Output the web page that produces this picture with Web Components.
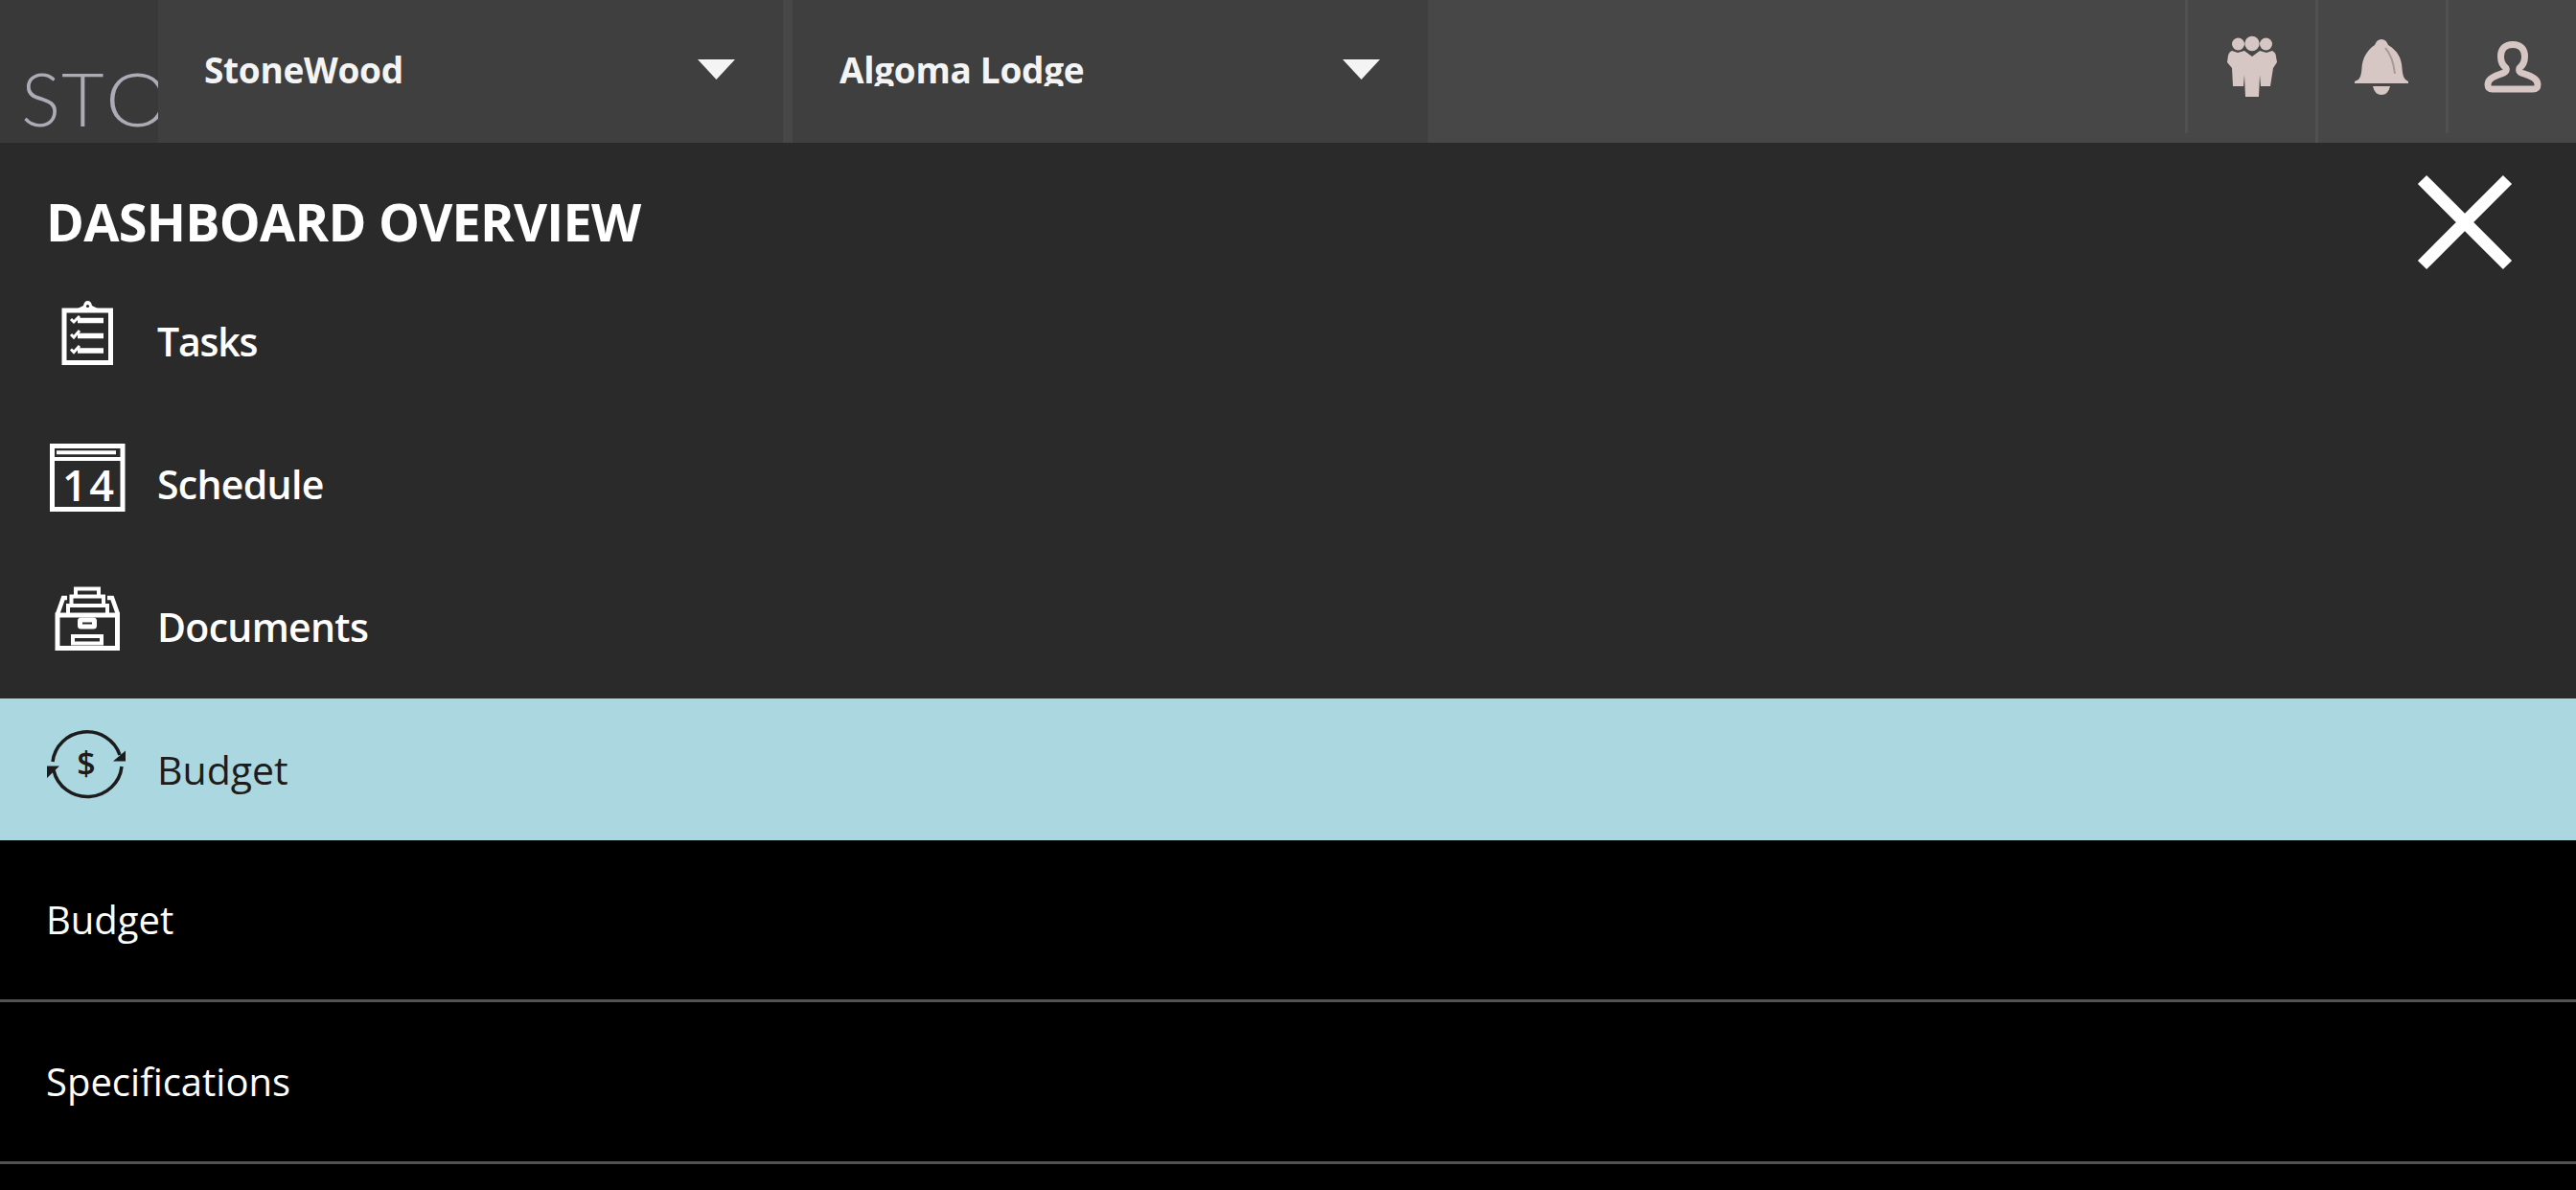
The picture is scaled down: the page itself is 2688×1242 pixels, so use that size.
<!DOCTYPE html>
<html lang="en">
<head>
<meta charset="utf-8">
<title>Dashboard Overview</title>
<style>
  html, body {
    margin: 0;
    height: 100%;
    overflow: hidden;
    background: #000;
    font-family: "Open Sans", "Noto Sans", sans-serif;
  }
</style>
</head>
<body>
<sw-app>
  <sw-header slot="header">
    <sw-logo><span style="width:42px">S</span><span style="width:46px">T</span><span style="transform:scaleX(1.1)">O</span></sw-logo>
    <sw-select style="width:652px; --pad:48px; --arrow:50px; --arrow-width:39px; --spacing:-0.3px">StoneWood</sw-select>
    <sw-select style="width:663px; margin-left:10px; --pad:49px; --arrow:50px; --arrow-width:39px; --spacing:-0.3px">Algoma Lodge</sw-select>
    <sw-action slot="actions" icon="people" short></sw-action>
    <sw-action slot="actions" icon="bell"></sw-action>
    <sw-action slot="actions" icon="user" short></sw-action>
  </sw-header>
  <sw-menu heading="DASHBOARD OVERVIEW">
    <sw-menu-item icon="tasks" style="letter-spacing:-1.2px">Tasks</sw-menu-item>
    <sw-menu-item icon="schedule">Schedule</sw-menu-item>
    <sw-menu-item icon="documents">Documents</sw-menu-item>
    <sw-menu-item icon="budget" active>Budget</sw-menu-item>
    <sw-submenu-item>Budget</sw-submenu-item>
    <sw-submenu-item>Specifications</sw-submenu-item>
  </sw-menu>
</sw-app>

<script>
const ICONS = {
  people: `
    <svg width="54" height="66" viewBox="0 0 54 66" fill="currentColor">
      <circle cx="12.500" cy="9" r="6.500"/>
      <circle cx="27" cy="8.500" r="7.700"/>
      <circle cx="41.500" cy="9" r="6.500"/>
      <path d="M6 16 L12 18 L19 16 L27 22 L35 16 L42 18 L48 16 Q52 18 52 22 L53 28 L49 34 L46 53 H36 L35 41 L34 64 H20 L19 41 L18 53 H7 L6 34 L1 28 L2 21 Q3 17 6 16 Z"/>
    </svg>`,
  bell: `
    <svg width="58" height="62" viewBox="0 0 58 62">
      <path fill="currentColor" d="M29 2 Q34 2 36 8 C46 14 50 22 50.500 32 Q51 41 54 44 L57 46 V48 H1 V46 L5 44 Q8 41 8.500 32 C9 22 14 13 22 8 Q24 2 29 2 Z"/>
      <path fill="currentColor" d="M20 51 H38 Q36 60 29 60 Q22 60 20 51 Z"/>
      <path fill="none" stroke="#a79b99" stroke-width="2" d="M33 11 Q41 20 43 38"/>
    </svg>`,
  user: `
    <svg width="60" height="56" viewBox="0 0 60 56" fill="none" stroke="currentColor" stroke-width="7" stroke-linejoin="round">
      <path d="M30 4.500 C21 4.500 17.500 10 17.500 17 C17.500 23 19 26 23 29 C24 32 22 34 18 35 C9 38 4 41 4 46 C4 50 5 51 9 51 H51 C55 51 56 50 56 46 C56 41 51 38 42 35 C37 34 36 32 37 29 C41 26 42.500 23 42.500 17 C42.500 10 39 4.500 30 4.500 Z"/>
    </svg>`,
  close: `
    <svg width="100" height="100" viewBox="0 0 100 100" stroke="#fff" stroke-width="13">
      <path d="M5.500 5.500 L94.500 94.500 M94.500 5.500 L5.500 94.500"/>
    </svg>`,
  tasks: `
    <svg width="84" height="100" viewBox="0 0 84 100" fill="none" stroke="currentColor" stroke-width="5">
      <path d="M19 22 H67.500 V76.500 H19 Z"/>
      <path fill="currentColor" stroke="none" d="M33 24 V20 L39 17 Q40 12 43.500 12 Q47 12 48 17 L54 20 V24 Z"/>
      <circle cx="43.500" cy="17.500" r="1.600" fill="#2a2a2a" stroke="none"/>
      <path stroke-width="5.500" d="M33 32.500 H60 M33 48.500 H60 M33 64 H60"/>
      <path stroke-width="3" d="M26 31 L29 34 L35 28 M26 47 L29 50 L35 43 M26 62.500 L29 65.500 L35 59"/>
    </svg>`,
  schedule: `
    <svg width="84" height="100" viewBox="0 0 84 100" fill="none" stroke="currentColor" stroke-width="5">
      <path d="M6.500 14.500 H80 V80.500 H6.500 Z"/>
      <path stroke-width="4" d="M11 21.300 H73 M5 28 H80"/>
      <text x="17" y="71.500" fill="currentColor" stroke="none" font-size="45" font-weight="650" textLength="54">14</text>
    </svg>`,
  documents: `
    <svg width="84" height="100" viewBox="0 0 84 100" fill="none" stroke="currentColor" stroke-width="5">
      <path d="M12 42 H74.500 V76.500 H12 Z"/>
      <path stroke-width="4.500" d="M12 41 L18 24 H22 M75 41 L69 24 H64"/>
      <path stroke-width="4" d="M31 21 V14.500 H55 V21 M26.500 32 V22.500 H60 V32 M23 40 V32 H64 V40"/>
      <rect x="35.500" y="47" width="15" height="7" rx="1"/>
      <rect x="28" y="64" width="30" height="7.500" stroke-width="4"/>
    </svg>`,
  budget: `
    <svg width="84" height="100" viewBox="0 0 84 100" fill="none" stroke="currentColor" stroke-width="3.500">
      <path d="M7 46 A36 35 0 0 1 77 39"/>
      <path d="M79 51 A36 35 0 0 1 8 55"/>
      <path fill="currentColor" stroke="none" d="M70 45.500 H83 V34.500 Z M1 63 V50.500 H14 Z"/>
      <text x="42" y="60" fill="currentColor" stroke="none" font-size="34" font-weight="600" text-anchor="middle">$</text>
    </svg>`
};

class SwApp extends HTMLElement {
  constructor() {
    super();
    this._root = this.attachShadow({mode: 'open'});
  }

  connectedCallback() {
    this._root.innerHTML = `
    <style>
    :host {
      display: flex;
      flex-direction: column;
      height: 100vh;
      overflow: hidden;
    }
    </style>
    <slot name="header"></slot>
    <slot></slot>
    `;
  }
}

class SwHeader extends HTMLElement {
  constructor() {
    super();
    this._root = this.attachShadow({mode: 'open'});
  }

  connectedCallback() {
    this._root.innerHTML = `
    <style>
    :host {
      display: flex;
      flex: none;
      height: 149px;
      background: #474747;
    }

    .actions {
      display: flex;
      margin-left: auto;
    }
    </style>
    <slot></slot>
    <div class="actions"><slot name="actions"></slot></div>
    `;
  }
}

class SwLogo extends HTMLElement {
  constructor() {
    super();
    this._root = this.attachShadow({mode: 'open'});
  }

  connectedCallback() {
    this._root.innerHTML = `
    <style>
    :host {
      display: flex;
      flex: none;
      box-sizing: border-box;
      width: 165px;
      height: 149px;
      padding: 56px 0 0 22px;
      overflow: hidden;
      background: #393939;
      color: #acacb6;
      font: 300 77px/93px Lato, sans-serif;
    }

    ::slotted(span) {
      flex: none;
      transform-origin: 0 0;
    }
    </style>
    <slot></slot>
    `;
  }
}

class SwSelect extends HTMLElement {
  constructor() {
    super();
    this._root = this.attachShadow({mode: 'open'});
  }

  connectedCallback() {
    this._root.innerHTML = `
    <style>
    :host {
      display: flex;
      flex: none;
      box-sizing: border-box;
      align-items: flex-start;
      justify-content: space-between;
      padding: 0 var(--arrow) 0 var(--pad);
      background: #3f3f3f;
      color: #f4f4f4;
    }

    .value {
      height: 34px;
      margin-top: 56px;
      overflow: hidden;
      font-size: 37px;
      font-weight: 700;
      line-height: 34px;
      letter-spacing: var(--spacing);
      white-space: nowrap;
    }

    .arrow {
      width: var(--arrow-width);
      height: 21px;
      margin-top: 62px;
      background: #f4f4f4;
      clip-path: polygon(0 0, 100% 0, 50% 100%);
    }
    </style>
    <span class="value"><slot></slot></span>
    <span class="arrow"></span>
    `;
  }
}

class SwAction extends HTMLElement {
  constructor() {
    super();
    this._root = this.attachShadow({mode: 'open'});
  }

  connectedCallback() {
    this._root.innerHTML = `
    <style>
    :host {
      display: flex;
      box-sizing: border-box;
      width: 136px;
      height: 149px;
      padding: 0 2px 9px 0;
      align-items: center;
      justify-content: center;
      border-left: 3px solid #515151;
      color: #d6c7c4;
    }

    :host([short]) {
      height: 139px;
      padding: 0;
    }
    </style>
    ${ICONS[this.getAttribute('icon')]}
    `;
  }
}

class SwMenu extends HTMLElement {
  constructor() {
    super();
    this._root = this.attachShadow({mode: 'open'});
  }

  connectedCallback() {
    this._root.innerHTML = `
    <style>
    :host {
      display: block;
    }

    .title {
      display: flex;
      box-sizing: border-box;
      height: 133px;
      padding: 33px 66px 0 48px;
      justify-content: space-between;
      align-items: flex-start;
      background: #2a2a2a;
    }

    h1 {
      margin: 0;
      color: #fff;
      font-size: 54px;
      font-weight: 700;
      line-height: 98px;
      letter-spacing: -0.75px;
      white-space: nowrap;
    }
    </style>
    <div class="title">
      <h1>${this.getAttribute('heading')}</h1>
      ${ICONS.close}
    </div>
    <slot></slot>
    `;
  }
}

class SwMenuItem extends HTMLElement {
  constructor() {
    super();
    this._root = this.attachShadow({mode: 'open'});
  }

  connectedCallback() {
    this._root.innerHTML = `
    <style>
    :host {
      display: flex;
      box-sizing: border-box;
      height: 149px;
      padding: 20px 48px 0;
      gap: 32px;
      background: #2a2a2a;
      color: #fff;
      font-size: 41px;
      font-weight: 650;
      letter-spacing: -0.7px;
    }

    :host([active]) {
      height: 148px;
      background: #abd7e0;
      color: #1c1c1c;
      font-weight: 420;
      letter-spacing: 0;
    }

    svg {
      flex: none;
      letter-spacing: 0;
    }

    .label {
      line-height: 108px;
    }
    </style>
    ${ICONS[this.getAttribute('icon')]}
    <span class="label"><slot></slot></span>
    `;
  }
}

class SwSubmenuItem extends HTMLElement {
  constructor() {
    super();
    this._root = this.attachShadow({mode: 'open'});
  }

  connectedCallback() {
    this._root.innerHTML = `
    <style>
    :host {
      display: block;
      box-sizing: border-box;
      height: 169px;
      padding-left: 48px;
      border-bottom: 3px solid #525252;
      background: #000;
      color: #fff;
      font-size: 40px;
      font-weight: 420;
      line-height: 165px;
    }
    </style>
    <slot></slot>
    `;
  }
}

window.customElements.define('sw-app', SwApp);
window.customElements.define('sw-header', SwHeader);
window.customElements.define('sw-logo', SwLogo);
window.customElements.define('sw-select', SwSelect);
window.customElements.define('sw-action', SwAction);
window.customElements.define('sw-menu', SwMenu);
window.customElements.define('sw-menu-item', SwMenuItem);
window.customElements.define('sw-submenu-item', SwSubmenuItem);
</script>
</body>
</html>
